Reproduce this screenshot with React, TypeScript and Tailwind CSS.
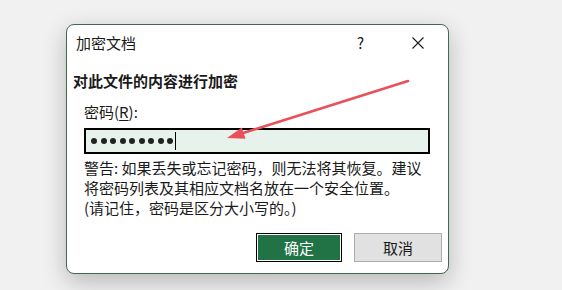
import React from "react";

const font = { fontFamily: '"Noto Sans CJK SC", "Noto Sans", sans-serif' };

export default function App() {
  return (
    <div
      className="relative w-[562px] h-[290px] overflow-hidden bg-[#f1f1f1] pl-[66px] pt-[24px]"
      style={font}
    >
      <div className="box-border w-[383px] h-[250px] rounded-[8px] border border-[#40694f] bg-white shadow-[0_8px_24px_rgba(0,0,0,0.24)] flex flex-col text-[15px] leading-[20px] text-[#1a1a1a]">
        {/* title bar */}
        <div className="flex items-center h-[20px] mt-[8px] pl-[9px]">
          <span>加密文档</span>
          <span className="ml-auto mr-[48px]">?</span>
          <svg width="12" height="12" viewBox="0 0 12 12" className="mr-[24px]">
            <path d="M0.5 0.5 L11.5 11.5 M11.5 0.5 L0.5 11.5" stroke="#1a1a1a" strokeWidth="1.1" />
          </svg>
        </div>
        {/* header */}
        <div className="mt-[18px] pl-[6px] font-bold">对此文件的内容进行加密</div>
        {/* label */}
        <div className="mt-[11px] pl-[17px]">
          密码(<span className="underline underline-offset-2">R</span>):
        </div>
        {/* input */}
        <div className="mt-[6px] ml-[17px] w-[346px] h-[26px] box-border border-2 border-black bg-[#e7f2ec] flex items-center pl-[5px]">
          <div className="flex gap-[3.5px]">
            {Array.from({ length: 9 }).map((_, i) => (
              <span key={i} className="block w-[6px] h-[6px] rounded-full bg-[#222]" />
            ))}
          </div>
          <span className="block w-px h-[18px] bg-black ml-[2px]" />
        </div>
        {/* warning */}
        <div className="mt-[4px] pl-[17px]">
          <div>警告: 如果丢失或忘记密码，则无法将其恢复。建议</div>
          <div>将密码列表及其相应文档名放在一个安全位置。</div>
          <div>(请记住，密码是区分大小写的。)</div>
        </div>
        {/* buttons */}
        <div className="mt-[15px] flex justify-end pr-[6px] gap-[12px]">
          <button className="w-[86px] h-[29px] box-border border border-black bg-[#217346] shadow-[inset_0_0_0_1px_#ffffff] text-white text-[15px]">
            确定
          </button>
          <button className="w-[88px] h-[29px] box-border border border-[#adadad] bg-[#e1e1e1] text-[#1a1a1a] text-[15px]">
            取消
          </button>
        </div>
      </div>
      {/* red annotation arrow */}
      <svg className="absolute left-0 top-0 pointer-events-none" width="562" height="290">
        <line x1="408" y1="81" x2="240" y2="134" stroke="#e9515a" strokeWidth="2.6" strokeLinecap="round" />
        <polygon points="227,138 245.5,138.8 241.8,127.5" fill="#e9515a" />
      </svg>
    </div>
  );
}
